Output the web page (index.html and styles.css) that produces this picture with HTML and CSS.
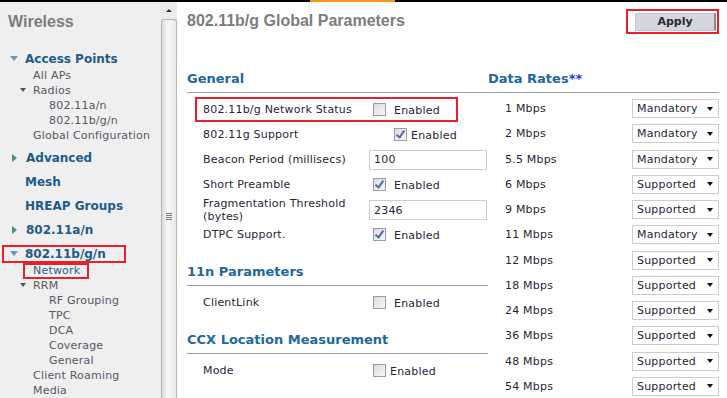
FILE: index.html
```html
<!DOCTYPE html>
<html lang="en">
<head>
    <meta charset="UTF-8">
    <title>802.11b/g Global Parameters</title>
    <link rel="stylesheet" href="styles.css">
</head>
<body>
    <div class="topbar"><div class="topbar-active"></div></div>
    <div class="page">
        <div class="sidebar">
            <div class="side-title">Wireless</div>
            <div class="nav-top open">Access Points</div>
            <div class="nav-sub">All APs</div>
            <div class="nav-sub open">Radios</div>
            <div class="nav-sub2">802.11a/n</div>
            <div class="nav-sub2">802.11b/g/n</div>
            <div class="nav-sub">Global Configuration</div>
            <div class="nav-top closed">Advanced</div>
            <div class="nav-top">Mesh</div>
            <div class="nav-top">HREAP Groups</div>
            <div class="nav-top closed">802.11a/n</div>
            <div class="nav-top open marked">802.11b/g/n</div>
            <div class="nav-sub"><span class="current">Network</span></div>
            <div class="nav-sub open">RRM</div>
            <div class="nav-sub2">RF Grouping</div>
            <div class="nav-sub2">TPC</div>
            <div class="nav-sub2">DCA</div>
            <div class="nav-sub2">Coverage</div>
            <div class="nav-sub2">General</div>
            <div class="nav-sub">Client Roaming</div>
            <div class="nav-sub">Media</div>
        </div>
        <div class="scrollbar">
            <div class="scroll-up"></div>
            <div class="scroll-thumb"><div class="grip"></div></div>
        </div>
        <div class="main">
            <div class="main-head">
                <h1>802.11b/g Global Parameters</h1>
                <div class="apply-box"><button class="apply">Apply</button></div>
            </div>
            <div class="columns">
                <div class="col-left">
                    <h2 class="section">General</h2>
                    <div class="row first marked">
                        <span class="lbl">802.11b/g Network Status</span>
                        <span class="val"><input type="checkbox" class="cb">Enabled</span>
                    </div>
                    <div class="row">
                        <span class="lbl">802.11g Support</span>
                        <span class="val shifted"><input type="checkbox" class="cb" checked>Enabled</span>
                    </div>
                    <div class="row">
                        <span class="lbl">Beacon Period (millisecs)</span>
                        <span class="val"><input type="text" class="txt" value="100"></span>
                    </div>
                    <div class="row">
                        <span class="lbl">Short Preamble</span>
                        <span class="val"><input type="checkbox" class="cb" checked>Enabled</span>
                    </div>
                    <div class="row">
                        <span class="lbl two">Fragmentation Threshold<br>(bytes)</span>
                        <span class="val"><input type="text" class="txt" value="2346"></span>
                    </div>
                    <div class="row">
                        <span class="lbl">DTPC Support.</span>
                        <span class="val"><input type="checkbox" class="cb" checked>Enabled</span>
                    </div>

                    <h2 class="section next">11n Parameters</h2>
                    <div class="row first">
                        <span class="lbl">ClientLink</span>
                        <span class="val"><input type="checkbox" class="cb">Enabled</span>
                    </div>

                    <h2 class="section next">CCX Location Measurement</h2>
                    <div class="row first">
                        <span class="lbl">Mode</span>
                        <span class="val"><input type="checkbox" class="cb tight">Enabled</span>
                    </div>
                </div>
                <div class="col-right">
                    <h2 class="section">Data Rates<span class="stars">**</span></h2>
                    <div class="rates">
                        <div class="rate"><span>1 Mbps</span><div class="sel">Mandatory</div></div>
                        <div class="rate"><span>2 Mbps</span><div class="sel">Mandatory</div></div>
                        <div class="rate"><span>5.5 Mbps</span><div class="sel">Mandatory</div></div>
                        <div class="rate"><span>6 Mbps</span><div class="sel">Supported</div></div>
                        <div class="rate"><span>9 Mbps</span><div class="sel">Supported</div></div>
                        <div class="rate"><span>11 Mbps</span><div class="sel">Mandatory</div></div>
                        <div class="rate"><span>12 Mbps</span><div class="sel">Supported</div></div>
                        <div class="rate"><span>18 Mbps</span><div class="sel">Supported</div></div>
                        <div class="rate"><span>24 Mbps</span><div class="sel">Supported</div></div>
                        <div class="rate"><span>36 Mbps</span><div class="sel">Supported</div></div>
                        <div class="rate"><span>48 Mbps</span><div class="sel">Supported</div></div>
                        <div class="rate"><span>54 Mbps</span><div class="sel">Supported</div></div>
                    </div>
                </div>
            </div>
        </div>
    </div>
</body>
</html>
```

FILE: styles.css
```css
body {
    margin: 0;
    background: #fff;
    font-family: "DejaVu Sans", Verdana, sans-serif;
    font-size: 11px;
    letter-spacing: 0.2px;
    color: #262636;
    overflow: hidden;
}
.topbar {
    height: 2px;
    background: #000;
}
.topbar-active {
    margin-left: 310px;
    width: 85px;
    height: 2px;
    background: #f7941d;
}
.page {
    display: flex;
    height: 396px;
}

/* left navigation */
.sidebar {
    width: 161px;
    flex-shrink: 0;
    background: #efefef;
}
.side-title {
    font-family: "Liberation Sans", Arial, sans-serif;
    font-weight: bold;
    font-size: 16px;
    letter-spacing: 0;
    line-height: 20px;
    color: #7d7d7d;
    margin: 10px 0 18px 8px;
}
.nav-top {
    box-sizing: border-box;
    width: 124px;
    margin: 6px 0 0 2px;
    padding-left: 23px;
    height: 18px;
    line-height: 18px;
    font-weight: bold;
    font-size: 12px;
    letter-spacing: 0;
    color: #1d5c88;
}
.nav-top::before {
    content: "";
    display: inline-block;
    width: 8px;
    margin-left: -15px;
    margin-right: 7px;
}
.nav-top.open::before {
    width: 0;
    height: 0;
    border-left: 4px solid transparent;
    border-right: 4px solid transparent;
    border-top: 5px solid #6d9bb5;
    vertical-align: 2px;
}
.nav-top.closed::before {
    width: 0;
    height: 0;
    margin-left: -13px;
    margin-right: 9px;
    border-top: 4px solid transparent;
    border-bottom: 4px solid transparent;
    border-left: 5px solid #4f8a8c;
    vertical-align: 0;
}
.nav-top.marked {
    outline: 2px solid #e8202a;
    outline-offset: -2px;
}
.nav-sub, .nav-sub2 {
    line-height: 15px;
    height: 15px;
    color: #575768;
    padding-left: 33px;
}
.nav-sub2 {
    padding-left: 49px;
}
.nav-sub.open::before {
    content: "";
    display: inline-block;
    width: 0;
    height: 0;
    margin-left: -13px;
    margin-right: 7px;
    border-left: 3px solid transparent;
    border-right: 3px solid transparent;
    border-top: 4px solid #555;
    vertical-align: 2px;
}
.current {
    display: inline-block;
    margin-left: -10px;
    padding: 0 7px 0 8px;
    line-height: 12px;
    border: 2px solid #e8202a;
    color: #1d5c88;
}

/* scrollbar */
.scrollbar {
    width: 16px;
    flex-shrink: 0;
    background: #ececec;
    display: flex;
    flex-direction: column;
}
.scroll-up {
    height: 17px;
    display: flex;
    justify-content: center;
    align-items: center;
}
.scroll-up::before {
    content: "";
    border-left: 3px solid transparent;
    border-right: 3px solid transparent;
    border-bottom: 3px solid #333;
}
.scroll-thumb {
    flex: 1;
    border: 1px solid #b5b5b5;
    border-bottom: none;
    border-radius: 3px 3px 0 0;
    background: linear-gradient(90deg, #dcdcdc, #f7f7f7 40%, #e8e8e8);
    display: flex;
    align-items: center;
    justify-content: center;
}
.grip {
    width: 6px;
    height: 7px;
    margin-top: 14px;
    background: repeating-linear-gradient(#777 0 1px, transparent 1px 2px);
}

/* main area */
.main {
    flex: 1;
    padding: 0 8px 0 10px;
}
.main-head {
    height: 38px;
    display: flex;
    justify-content: space-between;
    align-items: center;
}
h1 {
    margin: 0;
    font-family: "Liberation Sans", Arial, sans-serif;
    font-size: 16px;
    letter-spacing: 0;
    color: #7d7d7d;
}
.apply-box {
    border: 2px solid #e8202a;
    padding: 2px 1px 1px 7px;
    width: 81px;
}
.apply {
    display: block;
    width: 81px;
    height: 18px;
    padding: 0;
    background: #d5d5de;
    border: 1px solid #c6c6cf;
    border-right: 2px solid #8a8a8a;
    font-family: "DejaVu Sans", Verdana, sans-serif;
    font-weight: bold;
    font-size: 11px;
    color: #2a2a2a;
}
.columns {
    display: flex;
}
.col-left {
    width: 301px;
}
.col-right {
    flex: 1;
}
.section {
    margin: 31px 0 0;
    padding-bottom: 5px;
    line-height: 16px;
    font-size: 13px;
    letter-spacing: 0;
    color: #23689a;
    border-bottom: 1px solid #9c9cb6;
}
.section.next {
    margin-top: 17px;
}
.stars {
    color: #3030ff;
}
.row {
    display: grid;
    grid-template-columns: 166px 1fr;
    align-items: center;
    height: 25px;
    margin-left: 8px;
    padding-left: 8px;
}
.row.first {
    margin-top: 4px;
}
.row.marked {
    width: 255px;
    outline: 2px solid #e8202a;
    outline-offset: -2px;
}
.lbl.two {
    line-height: 13px;
}
.val {
    display: flex;
    align-items: center;
    padding-top: 2px;
}
.val.shifted .cb {
    margin-left: 25px;
    margin-right: 4px;
}
.cb {
    appearance: none;
    position: relative;
    box-sizing: border-box;
    width: 13px;
    height: 13px;
    margin: -3px 8px 0 4px;
    border: 1px solid #9a9ba4;
    background: linear-gradient(135deg, #dcdce0, #f8f8f8);
}
.cb.tight {
    margin-right: 4px;
}
.cb:checked::after {
    content: "";
    position: absolute;
    left: 3px;
    top: 0;
    width: 3px;
    height: 7px;
    border: solid #4a6ca8;
    border-width: 0 2px 2px 0;
    transform: rotate(35deg);
}
.txt {
    box-sizing: border-box;
    width: 118px;
    height: 20px;
    margin: -2px 0 0;
    padding: 0 4px;
    border: 1px solid #cfcfcf;
    font-family: "DejaVu Sans", Verdana, sans-serif;
    font-size: 11px;
    letter-spacing: 0.2px;
    color: #262636;
}
.rates {
    margin-top: 3px;
}
.rate {
    display: grid;
    grid-template-columns: 127px 87px;
    align-items: center;
    height: 25.25px;
    padding-left: 17px;
}
.sel {
    box-sizing: border-box;
    height: 19px;
    line-height: 17px;
    padding-left: 4px;
    border: 1px solid #cdcdcd;
    display: flex;
    justify-content: space-between;
    align-items: center;
}
.sel::after {
    content: "";
    margin-right: 5px;
    border-left: 3px solid transparent;
    border-right: 3px solid transparent;
    border-top: 4px solid #111;
}
```
